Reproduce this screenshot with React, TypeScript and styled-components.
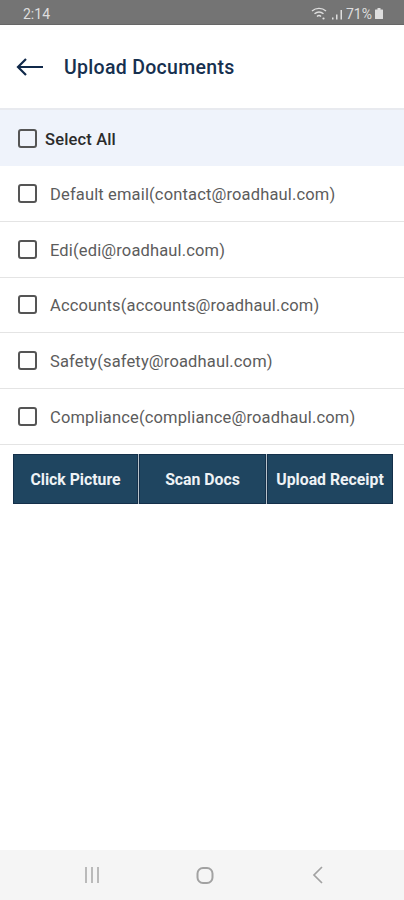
import styled, { createGlobalStyle } from 'styled-components';

const GlobalStyle = createGlobalStyle`
  html, body {
    margin: 0;
    padding: 0;
    background: #ffffff;
  }
  * {
    box-sizing: border-box;
  }
`;

const Screen = styled.div`
  width: 404px;
  height: 900px;
  display: flex;
  flex-direction: column;
  background: #ffffff;
  font-family: Roboto, 'Liberation Sans', sans-serif;
  overflow: hidden;
`;

const StatusBar = styled.div`
  height: 25px;
  flex: none;
  display: flex;
  align-items: center;
  justify-content: space-between;
  padding: 3px 21px 0 23px;
  background: #747474;
  border-bottom: 1px solid #666666;
  color: #dedede;
  font-size: 14px;
`;

const StatusIcons = styled.div`
  display: flex;
  align-items: center;
  gap: 3px;
`;

const Header = styled.header`
  height: 83px;
  flex: none;
  display: flex;
  align-items: center;
  gap: 20px;
  padding: 1px 16px 0;
`;

const BackButton = styled.button`
  width: 28px;
  height: 20px;
  padding: 0;
  border: 0;
  background: none;
  color: #10294a;
  display: flex;
`;

const Title = styled.h1`
  margin: 0;
  font-size: 19.5px;
  font-weight: 500;
  color: #16304f;
  letter-spacing: 0.3px;
`;

const SelectAllRow = styled.div`
  height: 58px;
  flex: none;
  display: flex;
  align-items: center;
  gap: 8px;
  padding: 0 18px;
  background: #eff3fb;
  border-top: 2px solid #e8eaef;
`;

const SelectAllLabel = styled.span`
  padding-top: 2px;
  font-size: 16.5px;
  font-weight: 500;
  color: #2b2b2b;
  letter-spacing: 0.15px;
`;

const EmailRow = styled.div`
  height: 55.8px;
  flex: none;
  display: flex;
  align-items: center;
  gap: 13px;
  padding: 0 18px;
  border-bottom: 1px solid #e4e4e4;
`;

const EmailLabel = styled.span`
  padding-top: 2px;
  font-size: 16.5px;
  color: #5c5c5c;
  letter-spacing: 0.15px;
`;

const Box = styled.span`
  width: 19px;
  height: 19px;
  flex: none;
  border: 2px solid #555555;
  border-radius: 3px;
`;

const Actions = styled.div`
  display: grid;
  grid-template-columns: 125px 127px 126px;
  gap: 1px;
  height: 50px;
  width: 380px;
  margin: 9px 0 0 13px;
  background: #b7c3cc;
`;

const ActionButton = styled.button`
  padding: 2px 0 0;
  border: 1px solid #14304a;
  background: #1f4560;
  color: #eef2f5;
  font-family: inherit;
  font-size: 15.8px;
  font-weight: 700;
  white-space: nowrap;
`;

const Spacer = styled.div`
  flex: 1;
`;

const NavBar = styled.nav`
  height: 50px;
  flex: none;
  display: grid;
  grid-template-columns: 92px 1fr 92px;
  align-items: center;
  justify-items: center;
  padding: 0 40px 0 46px;
  background: #f5f5f5;
  color: #a2a2a2;
`;

const emails = [
  'Default email(contact@roadhaul.com)',
  'Edi(edi@roadhaul.com)',
  'Accounts(accounts@roadhaul.com)',
  'Safety(safety@roadhaul.com)',
  'Compliance(compliance@roadhaul.com)',
];

export default function App() {
  return (
    <Screen>
      <GlobalStyle />
      <StatusBar>
        <span>2:14</span>
        <StatusIcons>
          <svg width="32" height="14" viewBox="0 0 32 14" fill="none" stroke="#dedede">
            <path d="M1 4C5 .5 11 .5 15 4M3.5 6.8C6.5 4.3 9.5 4.3 12.5 6.8M6 9.5C7.2 8.4 8.8 8.4 10 9.5" strokeWidth="1.4" />
            <circle cx="12.5" cy="11.5" r="1.1" fill="#dedede" stroke="none" />
            <path d="M21 12.5h1.5v-2H21zM25 12.5h1.5V7.5H25zM29.5 12.5H31V3h-1.5z" fill="#dedede" stroke="none" />
          </svg>
          <span>71%</span>
          <svg width="8" height="11" viewBox="0 0 8 11" fill="#dedede">
            <path d="M2.5 0h3v1.5H7.5a.5.5 0 0 1 .5.5v8.5a.5.5 0 0 1-.5.5h-7a.5.5 0 0 1-.5-.5V2a.5.5 0 0 1 .5-.5h2z" />
          </svg>
        </StatusIcons>
      </StatusBar>
      <Header>
        <BackButton aria-label="Back">
          <svg width="28" height="20" viewBox="0 0 28 20" fill="none" stroke="currentColor" strokeWidth="2.2">
            <path d="M27 10H2M10 2l-8 8 8 8" />
          </svg>
        </BackButton>
        <Title>Upload Documents</Title>
      </Header>
      <SelectAllRow>
        <Box />
        <SelectAllLabel>Select All</SelectAllLabel>
      </SelectAllRow>
      {emails.map((email) => (
        <EmailRow key={email}>
          <Box />
          <EmailLabel>{email}</EmailLabel>
        </EmailRow>
      ))}
      <Actions>
        <ActionButton>Click Picture</ActionButton>
        <ActionButton>Scan Docs</ActionButton>
        <ActionButton>Upload Receipt</ActionButton>
      </Actions>
      <Spacer />
      <NavBar>
        <svg width="18" height="18" viewBox="0 0 18 18" stroke="currentColor" strokeWidth="1.4">
          <path d="M3 1v16M9 1v16M15 1v16" />
        </svg>
        <svg width="18" height="17" viewBox="0 0 18 17" fill="none" stroke="currentColor" strokeWidth="2">
          <rect x="1.5" y="1" width="15" height="15" rx="5.5" />
        </svg>
        <svg width="12" height="18" viewBox="0 0 12 18" fill="none" stroke="currentColor" strokeWidth="1.7">
          <path d="M10 1L2 9l8 8" />
        </svg>
      </NavBar>
    </Screen>
  );
}
